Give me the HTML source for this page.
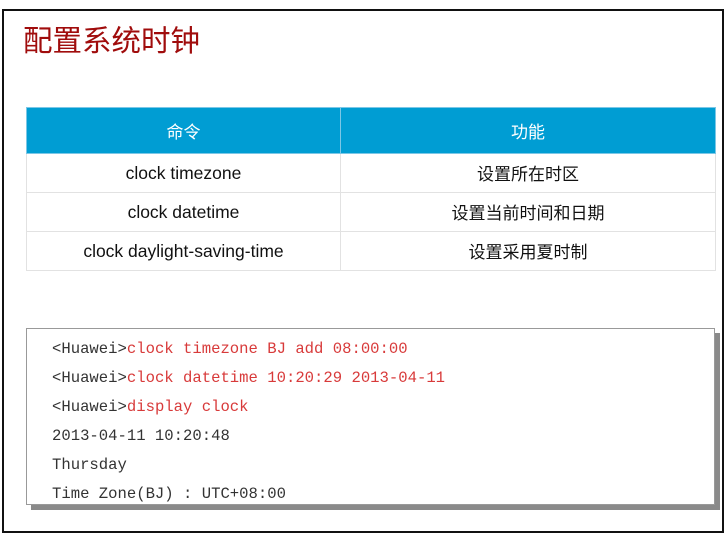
<!DOCTYPE html>
<html><head><meta charset="utf-8"><style>
body{margin:0;width:727px;height:539px;background:#fff;position:relative;overflow:hidden;font-family:"Liberation Sans","Noto Sans CJK SC",sans-serif}
.frame{position:absolute;left:2px;top:9px;width:718px;height:520px;border:2px solid #111;box-sizing:content-box}
.title{position:absolute;left:23px;top:19px;font-size:29.5px;color:#a00c0c;line-height:40px;font-family:"Noto Sans CJK SC",sans-serif}
table{position:absolute;left:26px;top:107px;width:690px;border-collapse:collapse;font-size:17.5px;color:#111}
td,th{border:1px solid #e2e2e2;text-align:center;padding:0;line-height:20px}
td:nth-child(2){font-family:"Noto Sans CJK SC",sans-serif;font-size:17px}
th{background:#009dd3;color:#fff;font-weight:normal;height:45px;border-color:#7cc7e6;font-family:"Noto Sans CJK SC",sans-serif;font-size:17px}
td{height:38px}
.code{position:absolute;left:26px;top:328px;width:689px;height:177px;border:1px solid #999;box-sizing:border-box;background:#fff;box-shadow:5px 5px 0 #8a8a8a;font-family:"Liberation Mono",monospace;font-size:15.6px;color:#333;padding:11px 0 0 25px}
.code div{height:29px;line-height:18px}
.r{color:#d83a3a}
</style></head><body>
<div class="frame"></div>
<div class="title">配置系统时钟</div>
<table>
<tr><th style="width:313px">命令</th><th>功能</th></tr>
<tr><td>clock timezone</td><td>设置所在时区</td></tr>
<tr><td>clock datetime</td><td>设置当前时间和日期</td></tr>
<tr><td>clock daylight-saving-time</td><td>设置采用夏时制</td></tr>
</table>
<div class="code">
<div>&lt;Huawei&gt;<span class="r">clock timezone BJ add 08:00:00</span></div>
<div>&lt;Huawei&gt;<span class="r">clock datetime 10:20:29 2013-04-11</span></div>
<div>&lt;Huawei&gt;<span class="r">display clock</span></div>
<div>2013-04-11 10:20:48</div>
<div>Thursday</div>
<div>Time Zone(BJ) : UTC+08:00</div>
</div>
</body></html>
